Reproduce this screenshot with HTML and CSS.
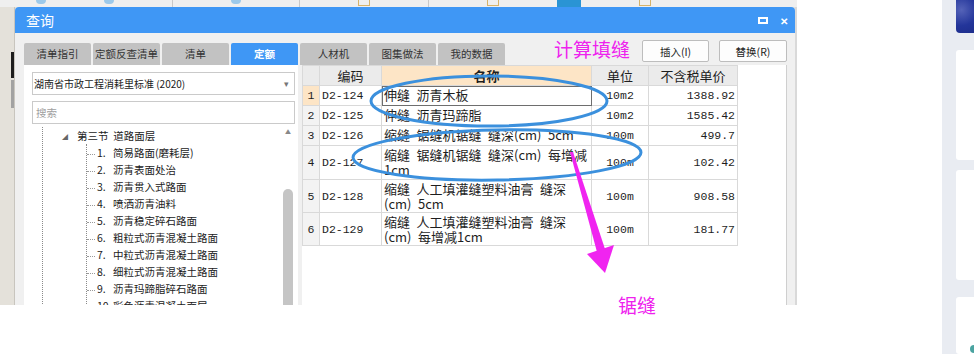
FILE: index.html
```html
<html>
    <head>
        <title>查询</title>
        <meta charset="utf-8">
        <link rel="stylesheet" href="styles.css">
    </head>
    <body>
        <div class="page">
            <div class="shot">
                <div class="appbar">
                    <span class="frag blue"></span>
                    <span class="frag blue"></span>
                    <span class="frag line"></span>
                    <span class="frag blue"></span>
                    <span class="frag line"></span>
                    <span class="frag gold"></span>
                    <span class="frag line"></span>
                    <span class="frag gold"></span>
                    <span class="frag solid"></span>
                    <span class="frag gold"></span>
                </div>
                <div class="appside">
                    <span class="side-dark"></span>
                    <span class="side-gray"></span>
                </div>
                <div class="dialog">
                    <div class="titlebar">
                        <span class="title">查询</span>
                        <span class="win-btns">
                            <span class="max"></span>
                            <span class="close">✕</span>
                        </span>
                    </div>
                    <div class="dlg-body">
                        <div class="toolbar">
                            <div class="tabs">
                                <span class="tab">清单指引</span>
                                <span class="tab">定额反查清单</span>
                                <span class="tab">清单</span>
                                <span class="tab active">定额</span>
                                <span class="tab">人材机</span>
                                <span class="tab">图集做法</span>
                                <span class="tab">我的数据</span>
                            </div>
                            <span class="note note-top">计算填缝</span>
                            <button class="btn">插入(I)</button>
                            <button class="btn">替换(R)</button>
                        </div>
                        <div class="panes">
                            <div class="lib">
                                <div class="select">湖南省市政工程消耗里标准 (2020)<span class="caret">▾</span></div>
                                <div class="search">搜索</div>
                                <div class="tree-wrap">
                                    <div class="tree">
                                        <div class="lvl">
                                            <div class="node"><span class="tri">◢</span>第三节&nbsp; 道路面层</div>
                                            <ul class="kids">
                                                <li><span class="num">1.</span>简易路面(磨耗层)</li>
                                                <li><span class="num">2.</span>沥青表面处治</li>
                                                <li><span class="num">3.</span>沥青贯入式路面</li>
                                                <li><span class="num">4.</span>喷洒沥青油料</li>
                                                <li><span class="num">5.</span>沥青稳定碎石路面</li>
                                                <li><span class="num">6.</span>粗粒式沥青混凝土路面</li>
                                                <li><span class="num">7.</span>中粒式沥青混凝土路面</li>
                                                <li><span class="num">8.</span>细粒式沥青混凝土路面</li>
                                                <li><span class="num">9.</span>沥青玛蹄脂碎石路面</li>
                                                <li><span class="num">10.</span>彩色沥青混凝土面层</li>
                                            </ul>
                                        </div>
                                    </div>
                                    <div class="scroll">
                                        <span class="arrow">▲</span>
                                        <span class="thumb"></span>
                                    </div>
                                </div>
                            </div>
                            <div class="grid-pane">
                                <table class="quota">
                                    <colgroup>
                                        <col class="c-no">
                                        <col class="c-code">
                                        <col class="c-name">
                                        <col class="c-unit">
                                        <col class="c-price">
                                    </colgroup>
                                    <thead>
                                        <tr>
                                            <th></th>
                                            <th>编码</th>
                                            <th class="hl">名称</th>
                                            <th>单位</th>
                                            <th>不含税单价</th>
                                        </tr>
                                    </thead>
                                    <tbody>
                                        <tr class="one">
                                            <td class="no sel">1</td>
                                            <td class="code">D2-124</td>
                                            <td class="name cur">伸缝&ensp;沥青木板</td>
                                            <td class="unit">10m2</td>
                                            <td class="price">1388.92</td>
                                        </tr>
                                        <tr class="one">
                                            <td class="no">2</td>
                                            <td class="code">D2-125</td>
                                            <td class="name">伸缝&ensp;沥青玛蹄脂</td>
                                            <td class="unit">10m2</td>
                                            <td class="price">1585.42</td>
                                        </tr>
                                        <tr class="one">
                                            <td class="no">3</td>
                                            <td class="code">D2-126</td>
                                            <td class="name">缩缝&ensp;锯缝机锯缝&ensp;缝深(cm)&ensp;5cm</td>
                                            <td class="unit">100m</td>
                                            <td class="price">499.7</td>
                                        </tr>
                                        <tr class="two tall">
                                            <td class="no">4</td>
                                            <td class="code">D2-127</td>
                                            <td class="name">缩缝&ensp;锯缝机锯缝&ensp;缝深(cm)&ensp;每增减<br>1cm</td>
                                            <td class="unit">100m</td>
                                            <td class="price">102.42</td>
                                        </tr>
                                        <tr class="two">
                                            <td class="no">5</td>
                                            <td class="code">D2-128</td>
                                            <td class="name">缩缝&ensp;人工填灌缝塑料油膏&ensp;缝深<br>(cm)&ensp;5cm</td>
                                            <td class="unit">100m</td>
                                            <td class="price">908.58</td>
                                        </tr>
                                        <tr class="two">
                                            <td class="no">6</td>
                                            <td class="code">D2-129</td>
                                            <td class="name">缩缝&ensp;人工填灌缝塑料油膏&ensp;缝深<br>(cm)&ensp;每增减1cm</td>
                                            <td class="unit">100m</td>
                                            <td class="price">181.77</td>
                                        </tr>
                                    </tbody>
                                </table>
                            </div>
                        </div>
                    </div>
                </div>
                <div class="appright"></div>
            </div>
            <div class="gutter"></div>
            <div class="sidebar">
                <div class="sb-top"></div>
                <div class="card card-a"></div>
                <div class="card card-b"></div>
                <div class="card card-c"><span class="dot"></span></div>
            </div>
            <svg class="marks" width="974" height="354" viewBox="0 0 974 354">
                <ellipse cx="489" cy="101" rx="118" ry="25" />
                <ellipse cx="497" cy="155" rx="144" ry="25" transform="rotate(-1 497 155)" />
                <polygon class="pink" points="570,152 573,152 605,249 597,252" />
                <polygon class="pink" points="587,254 614,245 605,273" />
            </svg>
            <span class="note note-bottom">锯缝</span>
        </div>
    </body>
</html>
```

FILE: styles.css
```css
body {
    margin: 0;
    background: white;
    font-family: "Noto Sans CJK SC", "Liberation Sans", sans-serif;
    color: #222;
}

.page {
    position: relative;
    display: flex;
    align-items: flex-start;
    width: 974px;
    height: 354px;
    overflow: hidden;
}

/* captured app window */
.shot {
    flex: 0 0 797px;
    height: 305px;
    display: grid;
    grid-template-columns: 15px 780px 2px;
    grid-template-rows: 7px 298px;
    overflow: hidden;
    background: #e4e1da;
}

.appbar {
    grid-column: 1 / -1;
    display: flex;
    align-items: flex-start;
    gap: 58px;
    padding-left: 36px;
    background: #efefef;
}

.frag {
    width: 10px;
    height: 4px;
}

.frag.blue {
    background: #9cc9ea;
    border-radius: 0 0 4px 4px;
}

.frag.line {
    width: 1px;
    height: 7px;
    background: #c9c9c9;
}

.frag.gold {
    width: 12px;
    height: 6px;
    border: 1px solid #d6b36a;
    border-top: 0;
    box-sizing: border-box;
}

.frag.solid {
    width: 24px;
    height: 7px;
    background: #2a94d4;
}

.appside {
    display: flex;
    flex-direction: column;
    align-items: flex-end;
    padding-top: 45px;
    border-right: 1px solid #c8c5be;
}

.side-dark {
    width: 3px;
    height: 26px;
    background: #1e1e1e;
}

.side-gray {
    width: 3px;
    height: 28px;
    margin-top: 2px;
    background: #a2a2a2;
}

.appright {
    background: #d9d9d9;
}

/* dialog */
.dialog {
    display: flex;
    flex-direction: column;
    background: #f0f0f0;
    border-radius: 4px 4px 0 0;
    overflow: hidden;
}

.titlebar {
    flex: 0 0 26px;
    display: flex;
    align-items: center;
    justify-content: space-between;
    padding: 0 7px 0 11px;
    background: #3f97f5;
    color: white;
}

.title {
    font-size: 14px;
}

.win-btns {
    display: flex;
    align-items: center;
    gap: 12px;
}

.max {
    width: 10px;
    height: 7px;
    box-sizing: border-box;
    border: 2px solid white;
}

.close {
    font-size: 10px;
    font-weight: bold;
}

.dlg-body {
    flex: 1;
    display: flex;
    flex-direction: column;
    padding: 7px 8px 0 9px;
}

.toolbar {
    display: flex;
    height: 25px;
}

.tabs {
    display: flex;
    gap: 2px;
    align-self: flex-end;
}

.tab {
    width: 67px;
    height: 22px;
    line-height: 22px;
    text-align: center;
    font-size: 10.5px;
    color: #333;
    background: #c2c2c2;
    border-radius: 2px 2px 0 0;
}

.tab.active {
    background: #3f97f5;
    color: white;
    font-weight: bold;
}

.note {
    color: #ee22ee;
    font-size: 19px;
    line-height: 20px;
}

.note-top {
    margin-left: auto;
    margin-right: 2px;
    margin-top: -1px;
}

.btn {
    width: 67px;
    height: 22px;
    padding: 0;
    margin-left: 10px;
    font-family: inherit;
    font-size: 10.5px;
    color: #222;
    background: #fdfdfd;
    border: 1px solid #bdbdbd;
    border-radius: 2px;
}

.btn:last-child {
    width: 68px;
}

.panes {
    flex: 1;
    display: flex;
    gap: 4px;
}

/* left library */
.lib {
    flex: 0 0 274px;
    box-sizing: border-box;
    padding: 7px 3px 0 8px;
    background: white;
    display: flex;
    flex-direction: column;
}

.select,
.search {
    height: 23px;
    box-sizing: border-box;
    border: 1px solid #cacaca;
    font-size: 10.5px;
    line-height: 21px;
    display: flex;
}

.select {
    padding-left: 1px;
    font-size: 10px;
    justify-content: space-between;
}

.caret {
    color: #777;
    font-size: 9px;
    padding-right: 5px;
}

.search {
    margin-top: 6px;
    padding-left: 3px;
    color: #a0a0a0;
}

.tree-wrap {
    margin-top: 3px;
    flex: 1;
    display: flex;
}

.tree {
    flex: 1;
    padding-left: 10px;
    font-size: 10.5px;
}

.lvl {
    height: 100%;
    border-left: 1px dotted #8a8a8a;
}

.node {
    height: 17px;
    line-height: 17px;
    padding-left: 19px;
}

.tri {
    display: inline-block;
    width: 6px;
    margin-right: 9px;
    font-size: 6px;
    color: #666;
    vertical-align: 1px;
}

.kids {
    list-style: none;
    margin: 0 0 0 43px;
    padding: 0;
    border-left: 1px dotted #8a8a8a;
}

.kids li {
    height: 17px;
    line-height: 17px;
    white-space: nowrap;
}

.kids li::before {
    content: "";
    display: inline-block;
    width: 8px;
    margin-right: 2px;
    border-top: 1px dotted #9a9a9a;
    vertical-align: middle;
}

.num {
    display: inline-block;
    width: 16px;
}

.scroll {
    flex: 0 0 10px;
    margin-right: 2px;
    display: flex;
    flex-direction: column;
    align-items: center;
}

.arrow {
    height: 14px;
    font-size: 6px;
    line-height: 10px;
    color: #888;
}

.thumb {
    flex: 1;
    width: 10px;
    margin-top: 48px;
    background: #c5c5c5;
    border-radius: 5px 5px 0 0;
}

/* quota table */
.grid-pane {
    flex: 0 0 485px;
    background: white;
    border-right: 1px solid #cfcfcf;
    box-sizing: border-box;
}

.quota {
    width: 436px;
    table-layout: fixed;
    border-collapse: collapse;
    font-size: 13px;
    color: #1e1e1e;
}

.c-no { width: 17px; }
.c-code { width: 62px; }
.c-name { width: 210px; }
.c-unit { width: 57px; }
.c-price { width: 89px; }

.quota th,
.quota td {
    border: 1px solid #d9d9d9;
    padding: 0 2px;
    white-space: nowrap;
    overflow: hidden;
}

.quota th {
    height: 20px;
    font-weight: normal;
    background: #ebebeb;
}

.quota th.hl {
    background: #fde5c6;
    font-weight: bold;
}

.quota tr.one td { height: 20px; }
.quota tr.two td { height: 33px; }
.quota tr.tall td { height: 34px; }

.quota td.no {
    padding: 0;
    text-align: center;
    background: #f3f3f3;
    font-family: "Liberation Mono", monospace;
    font-size: 11.5px;
}

.quota td.no.sel {
    background: #fde5c6;
}

.code,
.unit,
.price {
    font-family: "Liberation Mono", monospace;
    font-size: 11.5px;
}

.unit {
    text-align: center;
}

.price {
    text-align: right;
}

.quota td.name {
    vertical-align: top;
    padding: 1px 0 0 2px;
    line-height: 15px;
}

.quota td.cur {
    outline: 1px solid #6e6e6e;
    outline-offset: -1px;
}

/* right of capture */
.gutter {
    flex: 0 0 145px;
}

.sidebar {
    flex: 0 0 32px;
    height: 354px;
    box-sizing: border-box;
    padding-left: 14px;
    background: #e9ecf2;
    display: flex;
    flex-direction: column;
}

.sb-top {
    height: 33px;
    background: radial-gradient(circle at 30% 30%, #5563b8, #23359a 60%, #1d2d8c);
    border-radius: 0 0 0 4px;
}

.card {
    background: white;
    border-radius: 3px 0 0 3px;
}

.card-a {
    margin-top: 17px;
    height: 110px;
}

.card-b {
    margin-top: 10px;
    height: 110px;
}

.card-c {
    margin-top: 17px;
    flex: 1;
    display: flex;
    align-items: flex-end;
    justify-content: flex-end;
}

.dot {
    width: 4px;
    height: 8px;
    margin-bottom: 1px;
    border-radius: 4px 0 0 4px;
    background: #4aa3a0;
}

/* annotations drawn over the capture */
.marks {
    position: absolute;
    left: 0;
    top: 0;
    pointer-events: none;
}

.marks ellipse {
    fill: none;
    stroke: #3b90dd;
    stroke-width: 3;
}

.marks .pink {
    fill: #f024f0;
}

.note-bottom {
    position: absolute;
    left: 618px;
    top: 295px;
}
```
